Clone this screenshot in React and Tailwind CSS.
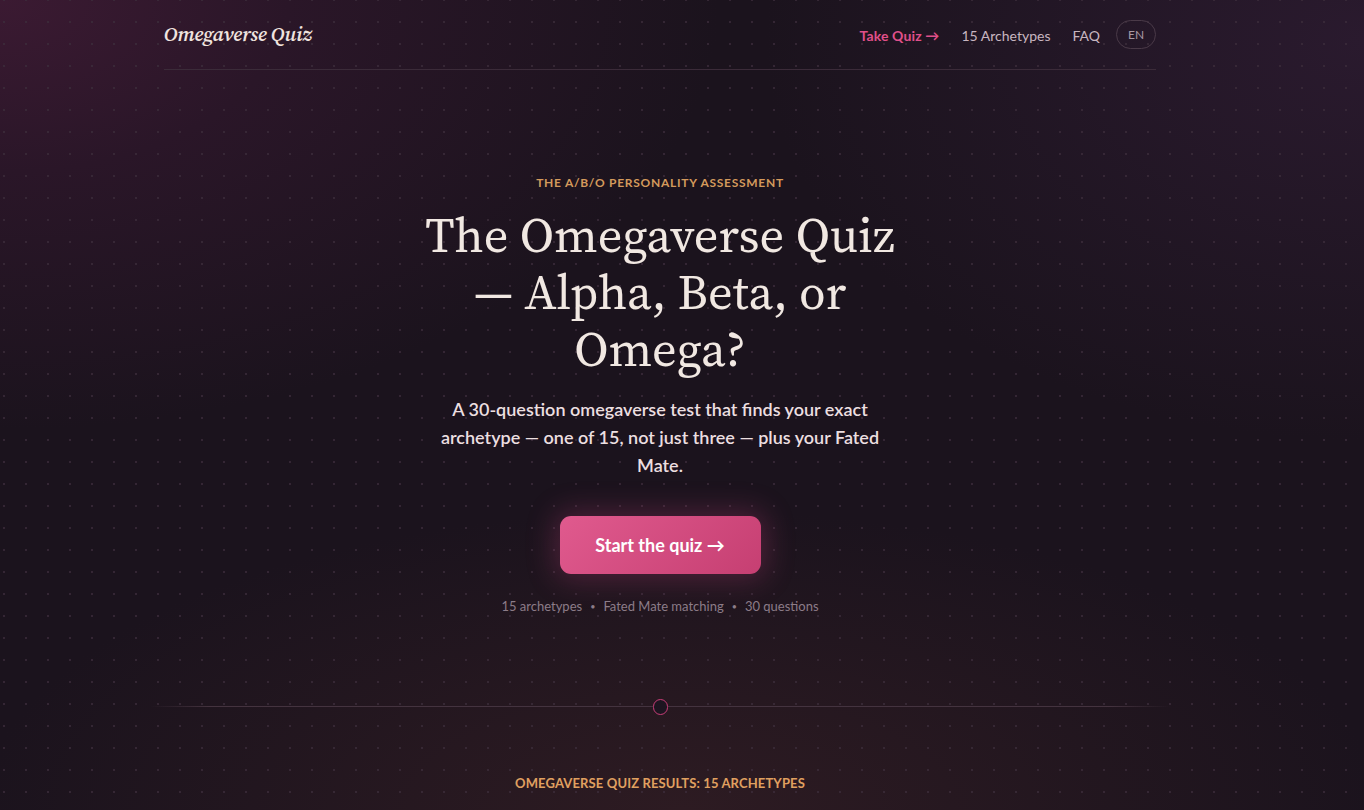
import React from "react";

const serif = "font-['Source_Serif_4','DejaVu_Serif','Liberation_Serif',serif]";
const sans = "font-['Lato','Noto_Sans',sans-serif]";

function Header() {
  return (
    <header className="flex items-center justify-between h-[70px] border-b border-[#3b2b39]">
      <a className={`${serif} italic font-semibold text-[20.5px] text-[#efe3df] tracking-[-0.01em]`}>Omegaverse Quiz</a>
      <nav className={`${sans} flex items-center gap-[22px] text-[14px]`}>
        <a className="font-bold text-[#e0508a] tracking-[0.01em] pt-[2px]">Take Quiz →</a>
        <a className="text-[#c8b6c0] pt-[2px]">15 Archetypes</a>
        <a className="text-[#c8b6c0] pt-[2px]">FAQ</a>
        <span className="-ml-[6px] flex items-center justify-center w-[40px] h-[29px] rounded-full border border-[#4a3a48] text-[12px] text-[#a898a4]">EN</span>
      </nav>
    </header>
  );
}

export default function App() {
  return (
    <div className="relative min-h-[810px] overflow-hidden bg-[#1b131d]">
      {/* glows */}
      <div className="absolute inset-0 bg-[radial-gradient(ellipse_720px_430px_at_0%_0%,#3b1a32_0%,#2a1628_40%,transparent_100%)]" />
      <div className="absolute inset-0 bg-[radial-gradient(ellipse_600px_400px_at_100%_5%,#2a1a2e_0%,transparent_100%)]" />
      <div className="absolute inset-0 bg-[radial-gradient(ellipse_700px_300px_at_50%_100%,#2d1b22_0%,transparent_100%)]" />
      <div className="absolute inset-0 bg-[radial-gradient(circle,#3c2d3b_1px,transparent_1.3px)] bg-size-[22px_22px] bg-position-[-7px_-11px] opacity-75" />

      <div className="relative w-[992px] ml-[164px]">
        <Header />

        <section className="flex flex-col items-center text-center pt-[104px]">
          <p className={`${sans} text-[12px] font-bold tracking-[0.06em] text-[#d49a5c]`}>THE A/B/O PERSONALITY ASSESSMENT</p>
          <h1 className={`${serif} mt-[15px] text-[48.5px] leading-[57px] text-[#f1e8e2] max-w-[500px]`}>
            The Omegaverse Quiz — Alpha, Beta, or Omega?
          </h1>
          <p className={`${sans} mt-[17px] max-w-[450px] text-[18px] leading-[28px] font-semibold text-[#ecdfe0]`}>
            A 30-question omegaverse test that finds your exact archetype — one of 15, not just three — plus your Fated Mate.
          </p>
          <button className={`${sans} mt-[37px] w-[201px] h-[58px] rounded-[11px] bg-[linear-gradient(135deg,#e05a8e,#c63f72)] text-[18px] font-bold text-white shadow-[0_0_28px_6px_rgba(210,70,130,0.26)]`}>
            Start the quiz →
          </button>
          <p className={`${sans} mt-[23px] flex items-center gap-[8px] text-[13px] text-[#8c7c88]`}>
            <span>15 archetypes</span>
            <span className="text-[9px]">•</span>
            <span>Fated Mate matching</span>
            <span className="text-[9px]">•</span>
            <span>30 questions</span>
          </p>
        </section>

        <div className="flex items-center mt-[82px] h-[16px] -mx-[14px]">
          <div className="flex-1 h-px bg-[linear-gradient(90deg,transparent,#44333f_12%,#44333f)]" />
          <div className="w-[15px] h-[16px] rounded-full border border-[#c83e78] bg-[#1d1520]" />
          <div className="flex-1 h-px bg-[linear-gradient(90deg,#44333f,#44333f_88%,transparent)]" />
        </div>

        <p className={`${sans} mt-[59px] text-center text-[13px] font-bold tracking-[0.01em] text-[#e0a060]`}>
          OMEGAVERSE QUIZ RESULTS: 15 ARCHETYPES
        </p>
      </div>
    </div>
  );
}
